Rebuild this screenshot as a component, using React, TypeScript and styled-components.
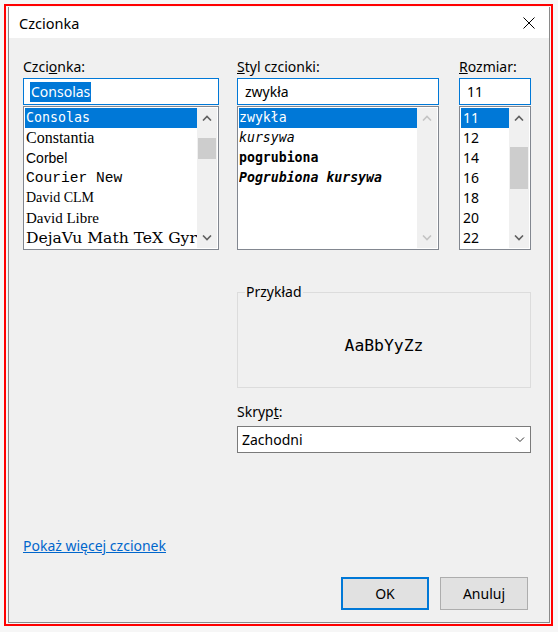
import styled, { createGlobalStyle } from "styled-components";

const GlobalStyle = createGlobalStyle`
  body {
    margin: 0;
    background: #f6f6f6;
    font-family: "Noto Sans", "Liberation Sans", sans-serif;
    font-size: 14px;
    color: #000;
  }
`;

const StyledFrame = styled.div`
  width: 549px;
  height: 622px;
  box-sizing: border-box;
  margin: 4px 0 0 4px;
  border: 2px solid #ff0000;
  padding: 1px 1px 1px 2px;
`;

const StyledDialog = styled.div`
  width: 542px;
  height: 616px;
  box-sizing: border-box;
  border: 1px solid #8a8a8a;
  border-top: none;
  background: #f0f0f0;
  display: flex;
  flex-direction: column;
`;

const StyledTitleBar = styled.div`
  height: 31px;
  flex-shrink: 0;
  background: #ffffff;
  display: flex;
  align-items: center;
  justify-content: space-between;
  padding: 0 14px 0 10px;
  font-size: 14.5px;
`;

const StyledClose = styled.div`
  width: 12px;
  height: 12px;
  display: flex;
  margin-top: 1px;
`;

const StyledContent = styled.div`
  flex: 1;
  display: flex;
  flex-direction: column;
  padding: 19px 18px 12px 14px;
`;

const StyledColumns = styled.div`
  display: flex;
`;

const StyledColumn = styled.div<{ $width: number; $gap: number }>`
  width: ${(p) => p.$width}px;
  margin-left: ${(p) => p.$gap}px;
  display: flex;
  flex-direction: column;
`;

const StyledLabel = styled.div`
  height: 20px;
  line-height: 20px;
  margin-bottom: 1px;
`;

const StyledInput = styled.div`
  height: 27px;
  box-sizing: border-box;
  border: 1px solid #0078d7;
  background: #ffffff;
  display: flex;
  align-items: center;
  padding-left: 6px;
  line-height: 20px;
`;

const StyledSelection = styled.span`
  background: #0078d7;
  color: #ffffff;
  padding: 0 1px 0 1px;
`;

const StyledPlainValue = styled.span`
  padding-left: 1px;
`;

const StyledListBox = styled.div`
  margin-top: 1px;
  height: 144px;
  box-sizing: border-box;
  border: 1px solid #828790;
  background: #ffffff;
  padding: 1px;
  display: flex;
`;

const StyledItems = styled.div`
  flex: 1;
  overflow: hidden;
`;

const StyledItem = styled.div<{
  $family: string;
  $size: number;
  $weight?: number;
  $italic?: boolean;
  $selected?: boolean;
  $indent: number;
}>`
  height: 20px;
  line-height: 20px;
  white-space: nowrap;
  overflow: hidden;
  padding-left: ${(p) => p.$indent}px;
  font-family: ${(p) => p.$family};
  font-size: ${(p) => p.$size}px;
  font-weight: ${(p) => p.$weight ?? 400};
  font-style: ${(p) => (p.$italic ? "italic" : "normal")};
  background: ${(p) => (p.$selected ? "#0078d7" : "transparent")};
  color: ${(p) => (p.$selected ? "#ffffff" : "#000000")};
`;

const StyledScrollbar = styled.div`
  width: 20px;
  background: #f0f0f0;
  display: flex;
  flex-direction: column;
`;

const StyledArrow = styled.div`
  height: 20px;
  display: flex;
  align-items: center;
  justify-content: center;
`;

const StyledTrack = styled.div`
  flex: 1;
`;

const StyledThumb = styled.div<{ $top: number; $height: number }>`
  margin-top: ${(p) => p.$top}px;
  height: ${(p) => p.$height}px;
  margin-left: 1px;
  margin-right: 1px;
  background: #cdcdcd;
`;

const StyledLower = styled.div`
  margin-left: 214px;
  display: flex;
  flex-direction: column;
`;

const StyledGroup = styled.fieldset`
  margin: 32px 0 0 0;
  padding: 0 8px 0 8px;
  border: 1px solid #dcdcdc;
  height: 106px;
  box-sizing: border-box;
  width: 294px;
`;

const StyledLegend = styled.legend`
  padding: 0 1px;
  line-height: 20px;
  margin-left: -1px;
`;

const StyledSample = styled.div`
  height: 85px;
  display: flex;
  align-items: center;
  justify-content: center;
  padding-top: 2px;
  box-sizing: border-box;
  font-family: "DejaVu Sans Mono", monospace;
  font-size: 16.4px;
`;

const StyledScriptLabel = styled(StyledLabel)`
  margin-top: 14px;
  margin-bottom: 4px;
`;

const StyledSelect = styled.div`
  width: 294px;
  height: 27px;
  box-sizing: border-box;
  border: 1px solid #7a7a7a;
  background: #ffffff;
  display: flex;
  align-items: center;
  justify-content: space-between;
  padding: 0 5px 0 4px;
`;

const StyledLink = styled.a`
  margin-top: auto;
  align-self: flex-start;
  line-height: 20px;
  color: #0066cc;
  text-decoration: underline;
  cursor: pointer;
`;

const StyledFooter = styled.div`
  display: flex;
  justify-content: flex-end;
  gap: 11px;
  margin-top: 21px;
  padding-right: 3px;
`;

const StyledButton = styled.button<{ $default?: boolean }>`
  width: 88px;
  height: 33px;
  box-sizing: border-box;
  background: #e1e1e1;
  border: ${(p) => (p.$default ? "2px solid #0078d7" : "1px solid #adadad")};
  font-family: inherit;
  font-size: 14px;
  color: #000;
  padding: 0;
`;

type Item = {
  label: string;
  family: string;
  size: number;
  weight?: number;
  italic?: boolean;
};

const fontItems: Item[] = [
  { label: "Consolas", family: '"DejaVu Sans Mono", monospace', size: 13.3 },
  { label: "Constantia", family: '"Liberation Serif", serif', size: 16, weight: 500 },
  { label: "Corbel", family: '"Liberation Sans", sans-serif', size: 14 },
  { label: "Courier New", family: '"Liberation Mono", monospace', size: 14.6 },
  { label: "David CLM", family: '"Liberation Serif", serif', size: 14 },
  { label: "David Libre", family: '"Liberation Serif", serif', size: 15 },
  { label: "DejaVu Math TeX Gyre", family: '"DejaVu Serif", serif', size: 15.6 },
];

const mono = '"DejaVu Sans Mono", monospace';

const styleItems: Item[] = [
  { label: "zwykła", family: mono, size: 13.2 },
  { label: "kursywa", family: mono, size: 13.2, italic: true },
  { label: "pogrubiona", family: mono, size: 13.2, weight: 700 },
  { label: "Pogrubiona kursywa", family: mono, size: 13.2, weight: 700, italic: true },
];

const sizeItems: Item[] = ["11", "12", "14", "16", "18", "20", "22"].map((s) => ({
  label: s,
  family: '"Noto Sans", sans-serif',
  size: 14,
}));

const Chevron = ({ up, color }: { up?: boolean; color: string }) => (
  <svg width="10" height="6" viewBox="0 0 10 6">
    <polyline
      points={up ? "1,5.5 5,1.5 9,5.5" : "1,0.5 5,4.5 9,0.5"}
      fill="none"
      stroke={color}
      strokeWidth="1.6"
    />
  </svg>
);

const Scrollbar = ({
  disabled,
  thumb,
}: {
  disabled?: boolean;
  thumb?: { top: number; height: number };
}) => {
  const color = disabled ? "#c4c4c4" : "#606060";
  return (
    <StyledScrollbar>
      <StyledArrow>
        <Chevron up color={color} />
      </StyledArrow>
      <StyledTrack>{thumb && <StyledThumb $top={thumb.top} $height={thumb.height} />}</StyledTrack>
      <StyledArrow>
        <Chevron color={color} />
      </StyledArrow>
    </StyledScrollbar>
  );
};

const ListBox = ({
  items,
  indent,
  disabled,
  thumb,
}: {
  items: Item[];
  indent: number;
  disabled?: boolean;
  thumb?: { top: number; height: number };
}) => (
  <StyledListBox>
    <StyledItems>
      {items.map((it, i) => (
        <StyledItem
          key={it.label}
          $family={it.family}
          $size={it.size}
          $weight={it.weight}
          $italic={it.italic}
          $selected={i === 0}
          $indent={indent}
        >
          {it.label}
        </StyledItem>
      ))}
    </StyledItems>
    <Scrollbar disabled={disabled} thumb={thumb} />
  </StyledListBox>
);

const App = () => {
  return (
    <>
      <GlobalStyle />
      <StyledFrame>
        <StyledDialog>
          <StyledTitleBar>
            <span>Czcionka</span>
            <StyledClose>
              <svg width="12" height="12" viewBox="0 0 12 12">
                <path d="M0.5 0.5 L11.5 11.5 M11.5 0.5 L0.5 11.5" stroke="#000" strokeWidth="1" />
              </svg>
            </StyledClose>
          </StyledTitleBar>
          <StyledContent>
            <StyledColumns>
              <StyledColumn $width={196} $gap={0}>
                <StyledLabel>
                  Czci<u>o</u>nka:
                </StyledLabel>
                <StyledInput>
                  <StyledSelection>Consolas</StyledSelection>
                </StyledInput>
                <ListBox items={fontItems} indent={1} thumb={{ top: 10, height: 21 }} />
              </StyledColumn>
              <StyledColumn $width={202} $gap={18}>
                <StyledLabel>
                  <u>S</u>tyl czcionki:
                </StyledLabel>
                <StyledInput>
                  <StyledPlainValue>zwykła</StyledPlainValue>
                </StyledInput>
                <ListBox items={styleItems} indent={0} disabled />
              </StyledColumn>
              <StyledColumn $width={72} $gap={20}>
                <StyledLabel>
                  <u>R</u>ozmiar:
                </StyledLabel>
                <StyledInput>
                  <StyledPlainValue>11</StyledPlainValue>
                </StyledInput>
                <ListBox items={sizeItems} indent={2} thumb={{ top: 19, height: 42 }} />
              </StyledColumn>
            </StyledColumns>
            <StyledLower>
              <StyledGroup>
                <StyledLegend>Przykład</StyledLegend>
                <StyledSample>AaBbYyZz</StyledSample>
              </StyledGroup>
              <StyledScriptLabel>
                Skryp<u>t</u>:
              </StyledScriptLabel>
              <StyledSelect>
                <span>Zachodni</span>
                <svg width="10" height="6" viewBox="0 0 10 6">
                  <polyline points="1,0.5 5,4.5 9,0.5" fill="none" stroke="#333" strokeWidth="1" />
                </svg>
              </StyledSelect>
            </StyledLower>
            <StyledLink>Pokaż więcej czcionek</StyledLink>
            <StyledFooter>
              <StyledButton $default>OK</StyledButton>
              <StyledButton>Anuluj</StyledButton>
            </StyledFooter>
          </StyledContent>
        </StyledDialog>
      </StyledFrame>
    </>
  );
};

export default App;
